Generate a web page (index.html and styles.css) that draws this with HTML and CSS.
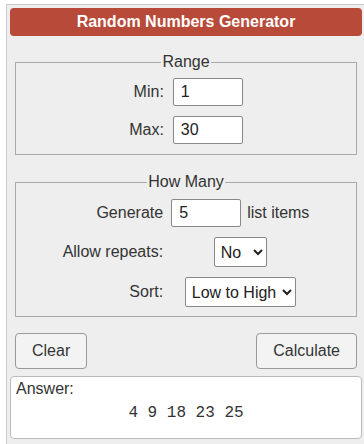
FILE: index.html
```html
<!DOCTYPE html>
<html lang="en">
<head>
    <meta charset="UTF-8">
    <meta name="viewport" content="width=device-width, initial-scale=1.0">
    <title>Random Numbers Generator</title>
    <link rel="stylesheet" href="styles.css">
</head>
<body>
    <div class="calc">
        <div class="calc-title">Random Numbers Generator</div>

        <fieldset class="group">
            <legend>Range</legend>
            <div class="range-grid">
                <label for="min">Min:</label>
                <input type="text" id="min" class="num" value="1">
                <label for="max">Max:</label>
                <input type="text" id="max" class="num" value="30">
            </div>
        </fieldset>

        <fieldset class="group group-many">
            <legend>How Many</legend>
            <div class="many-grid">
                <label for="count">Generate</label>
                <div class="gen-cell">
                    <input type="text" id="count" class="num" value="5">
                    <span>list items</span>
                </div>
                <label for="repeats">Allow repeats:</label>
                <select id="repeats" class="pick">
                    <option>No</option>
                    <option>Yes</option>
                </select>
                <label for="sort">Sort:</label>
                <select id="sort" class="pick">
                    <option>Low to High</option>
                    <option>High to Low</option>
                    <option>None</option>
                </select>
            </div>
        </fieldset>

        <div class="button-row">
            <button type="button" class="btn">Clear</button>
            <button type="button" class="btn">Calculate</button>
        </div>

        <div class="answer">
            <div>Answer:</div>
            <div class="answer-nums">4 9 18 23 25</div>
        </div>
    </div>
</body>
</html>
```

FILE: styles.css
```css
body {
    margin: 0;
    padding: 4px 0 0 6px;
    font-family: "Liberation Sans", Arial, sans-serif;
    font-size: 16px;
    line-height: 18px;
    color: #333;
    background-color: #fff;
    overflow: hidden;
}
.calc {
    width: 352px;
    padding: 3px 3px 20px;
    border: 1px solid #ccc;
    background-color: #eee;
}
.calc-title {
    height: 28px;
    line-height: 28px;
    text-align: center;
    font-weight: bold;
    color: #fff;
    background-color: #b84a39;
    border-radius: 4px;
}
.group {
    margin: 17px 5px 0;
    padding: 7px 0 10px;
    border: 1px solid #aaa;
}
.group legend {
    margin: 0 auto;
    padding: 0 1px;
}
.group-many {
    margin-top: 18px;
    padding: 8px 0 9px;
}
.range-grid {
    display: grid;
    grid-template-columns: auto auto;
    justify-content: center;
    align-items: center;
    column-gap: 9px;
    row-gap: 10px;
}
.range-grid label,
.many-grid label {
    text-align: right;
}
.num {
    width: 70px;
    height: 28px;
    box-sizing: border-box;
    padding: 0 7px;
    font-family: inherit;
    font-size: 16px;
    color: #222;
    background-color: #fff;
    border: 1px solid #888;
    border-radius: 2px;
}
.many-grid {
    display: grid;
    grid-template-columns: auto auto;
    justify-content: center;
    align-items: center;
    column-gap: 8px;
    row-gap: 10px;
}
.gen-cell {
    display: flex;
    align-items: center;
    gap: 6px;
}
.pick {
    justify-self: center;
    height: 30px;
    padding: 0 2px;
    font-family: inherit;
    font-size: 16px;
    color: #222;
    background-color: #fff;
    border: 1px solid #888;
    border-radius: 2px;
}
.button-row {
    display: flex;
    justify-content: space-between;
    margin: 16px 5px 0;
}
.btn {
    padding: 8px 16px;
    font-family: inherit;
    font-size: 16px;
    line-height: 18px;
    color: #333;
    background-color: #f3f3f3;
    border: 1px solid #999;
    border-radius: 4px;
}
.answer {
    margin-top: 7px;
    height: 63px;
    box-sizing: border-box;
    padding: 3px 5px;
    background-color: #fff;
    border: 1px solid #bbb;
    border-radius: 4px;
}
.answer-nums {
    margin-top: 6px;
    text-align: center;
    font-family: "Liberation Mono", "Courier New", monospace;
    font-size: 16px;
}
```
